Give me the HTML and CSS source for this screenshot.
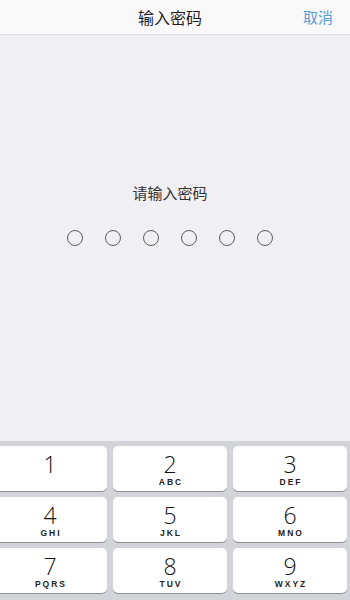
FILE: index.html
```html
<!DOCTYPE html>
<html lang="zh">
<head>
<meta charset="utf-8">
<link rel="stylesheet" href="styles.css">
</head>
<body>
<div class="screen">
  <header class="nav">
    <div class="nav-title">输入密码</div>
    <div class="nav-cancel">取消</div>
  </header>
  <main class="content">
    <div class="prompt">请输入密码</div>
    <div class="dots">
      <span class="dot"></span><span class="dot"></span><span class="dot"></span>
      <span class="dot"></span><span class="dot"></span><span class="dot"></span>
    </div>
  </main>
  <div class="keyboard">
    <div class="key"><span class="num">1</span><span class="letters"></span></div>
    <div class="key"><span class="num">2</span><span class="letters">ABC</span></div>
    <div class="key"><span class="num">3</span><span class="letters">DEF</span></div>
    <div class="key"><span class="num">4</span><span class="letters">GHI</span></div>
    <div class="key"><span class="num">5</span><span class="letters">JKL</span></div>
    <div class="key"><span class="num">6</span><span class="letters">MNO</span></div>
    <div class="key"><span class="num">7</span><span class="letters">PQRS</span></div>
    <div class="key"><span class="num">8</span><span class="letters">TUV</span></div>
    <div class="key"><span class="num">9</span><span class="letters">WXYZ</span></div>
  </div>
</div>
</body>
</html>
```
FILE: styles.css
```css
html, body {
  margin: 0;
  padding: 0;
  overflow: hidden;
  height: 600px;
  background: #efeff4;
}
body {
  font-family: "Noto Sans CJK SC", "Noto Sans", sans-serif;
}
.screen {
  width: 360px;
  height: 600px;
  margin-left: -10px;
  display: flex;
  flex-direction: column;
  background: #efeff4;
}
.nav {
  height: 34px;
  flex: none;
  background: #f9f9fa;
  border-bottom: 1px solid #dcdce0;
  display: flex;
  align-items: center;
  justify-content: center;
  position: relative;
}
.nav-title {
  font-size: 16px;
  color: #1c1c1e;
  line-height: 20px;
}
.nav-cancel {
  position: absolute;
  right: 17px;
  top: 7px;
  font-size: 15px;
  line-height: 20px;
  color: #5a9ad8;
}
.content {
  flex: 1;
  display: flex;
  flex-direction: column;
  align-items: center;
  padding-top: 148px;
}
.prompt {
  font-size: 15px;
  line-height: 20px;
  color: #333;
}
.dots {
  display: flex;
  gap: 22px;
  margin-top: 27px;
}
.dot {
  box-sizing: border-box;
  width: 16px;
  height: 16px;
  border: 1.5px solid #5c5c60;
  border-radius: 50%;
}
.keyboard {
  flex: none;
  height: 159px;
  background: #d2d4da;
  padding: 5px 3px 0;
  box-sizing: border-box;
  display: grid;
  grid-template-columns: repeat(3, 114px);
  grid-template-rows: repeat(3, 45px);
  gap: 6px;
  align-content: start;
}
.key {
  background: #fff;
  border-radius: 5px;
  box-shadow: 0 1px 0 #8e9096;
  display: flex;
  flex-direction: column;
  align-items: center;
}
.num {
  font-family: "Open Sans", "Noto Sans", sans-serif;
  font-weight: 300;
  font-size: 23px;
  line-height: 22px;
  margin-top: 7px;
  color: #111;
}
.letters {
  font-family: "Liberation Sans", Arial, sans-serif;
  font-weight: bold;
  font-size: 8.5px;
  letter-spacing: 2px;
  margin-right: -2px;
  margin-top: 2px;
  line-height: 10px;
  color: #222;
}
```
